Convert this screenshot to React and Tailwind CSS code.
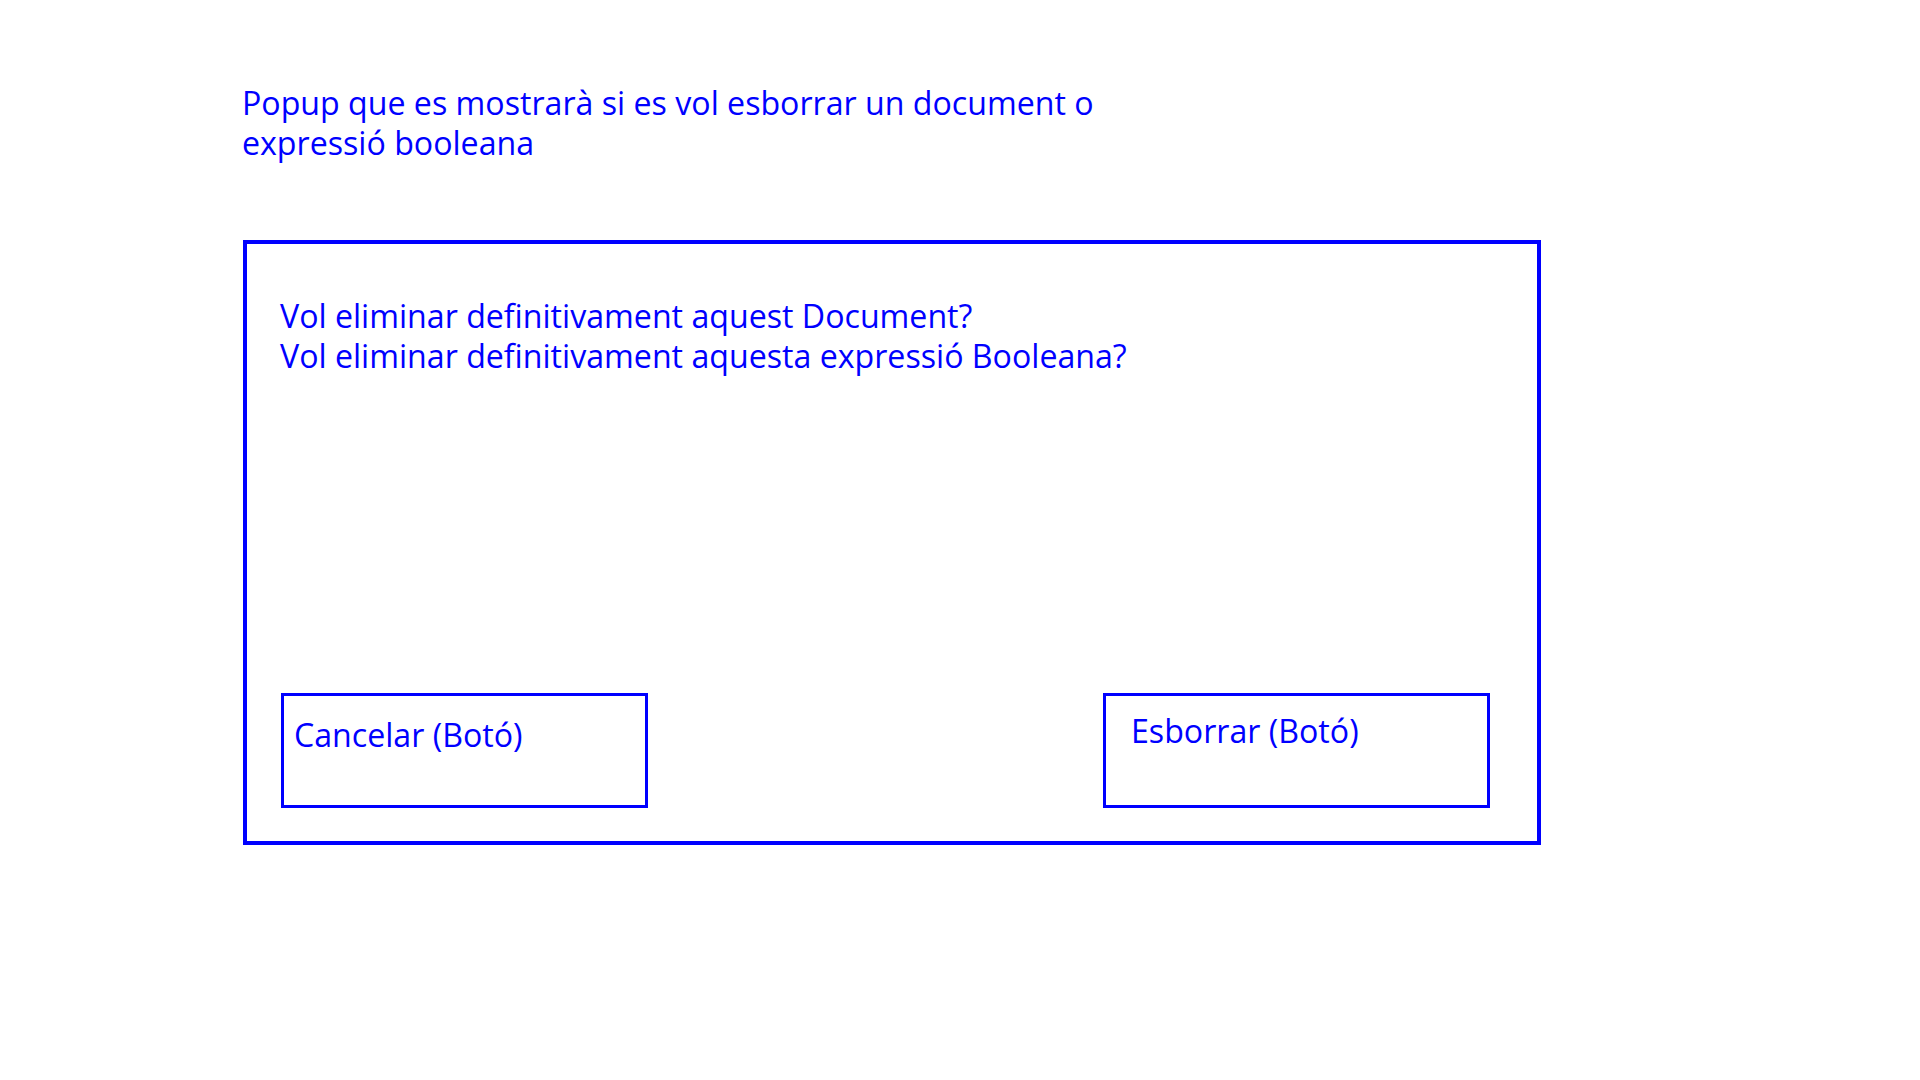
export default function App() {
  return (
    <div className="w-[1920px] h-[1080px] bg-white text-[#0000ff] font-['Open_Sans',sans-serif] text-[32.15px] leading-[40px]">
      <div className="pt-[83px] pl-[242px]">
        <p>
          Popup que es mostrarà si es vol esborrar un document o
          <br />
          expressió booleana
        </p>
      </div>

      <div className="mt-[77px] ml-[243px] w-[1298px] h-[605px] border-4 border-[#0000ff] flex flex-col justify-between pt-[52px] pb-[33px] pl-[33px] pr-[47px]">
        <div>
          <p>Vol eliminar definitivament aquest Document?</p>
          <p>Vol eliminar definitivament aquesta expressió Booleana?</p>
        </div>

        <div className="flex justify-between items-start pl-[1px]">
          <div className="w-[367px] h-[115px] border-[3px] border-[#0000ff] pt-[19px] pl-[10px]">
            Cancelar (Botó)
          </div>
          <div className="w-[387px] h-[115px] border-[3px] border-[#0000ff] pt-[15px] pl-[25px]">
            Esborrar (Botó)
          </div>
        </div>
      </div>
    </div>
  );
}
